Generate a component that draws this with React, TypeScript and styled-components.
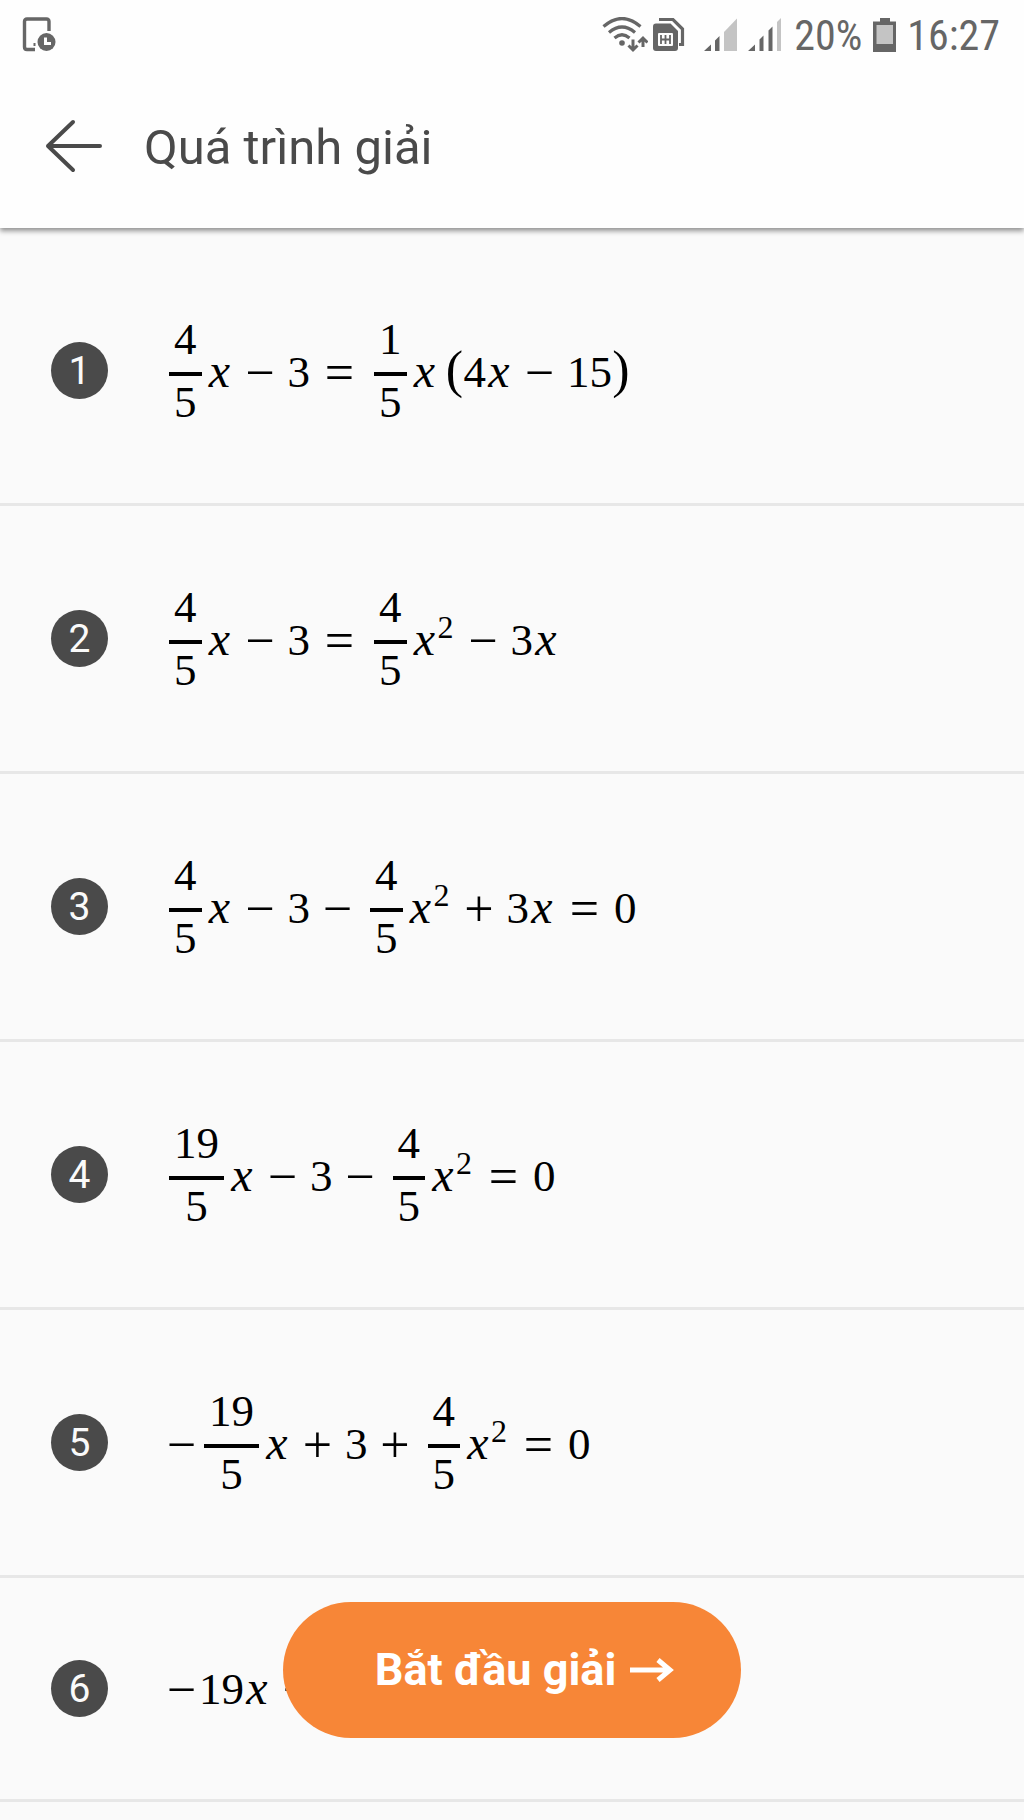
import React from "react";
import styled, { createGlobalStyle } from "styled-components";

const GlobalStyle = createGlobalStyle`
  * { box-sizing: border-box; }
  body { margin: 0; background: #fafafa; font-family: Roboto, "Noto Sans", sans-serif; }
`;

const Page = styled.div`
  min-height: 100vh;
  background: #fafafa;
`;

const Header = styled.header`
  position: relative;
  height: 228px;
  background: #fefefe;
  box-shadow: 0 3px 5px rgba(0, 0, 0, 0.42);
`;

const StatusBar = styled.div`
  display: flex;
  align-items: center;
  justify-content: space-between;
  height: 70px;
  padding: 0 24px 0 22px;
  color: #666;
`;

const StatusGroup = styled.div`
  display: flex;
  align-items: center;
`;

const StatusText = styled.span`
  padding-top: 2px;
  font-family: "Roboto Condensed", Roboto, sans-serif;
  font-size: 42px;
  line-height: 48px;
`;

const StatusIcon = styled.svg<{ $gap: number }>`
  display: block;
  flex: none;
  margin-right: ${(p) => p.$gap}px;
`;

const BatteryLevel = styled.div`
  display: flex;
  align-items: center;
  gap: 11px;
`;

const TitleBar = styled.div`
  display: flex;
  align-items: center;
  gap: 40px;
  height: 152px;
  padding: 0 44px;
`;

const BackButton = styled.button`
  display: flex;
  padding: 0;
  border: 0;
  background: none;
  color: #4a4a4a;
  cursor: pointer;
`;

const Title = styled.h1`
  margin: 0;
  padding-top: 4px;
  color: #4a4a4a;
  font-size: 49px;
  font-weight: 400;
  line-height: 60px;
`;

const Steps = styled.ol`
  margin: 0;
  padding: 10px 0 0;
  list-style: none;
`;

const Step = styled.li<{ $compact?: boolean }>`
  display: flex;
  align-items: center;
  gap: 56px;
  height: ${(p) => (p.$compact ? 224 : 268)}px;
  padding: 0 51px;
  border-bottom: 3px solid #e7e7e7;
`;

const Badge = styled.span`
  display: flex;
  flex: none;
  align-items: center;
  justify-content: center;
  width: 57px;
  height: 57px;
  border-radius: 50%;
  background: #4a4a4a;
  color: #fafafa;
  font-size: 39px;
  line-height: 46px;
`;

const Expression = styled.div`
  color: #000;
  font-family: "Liberation Serif", serif;
  font-size: 45px;
  line-height: 52px;
  white-space: nowrap;
`;

const FractionBox = styled.span`
  display: inline-flex;
  flex-direction: column;
  margin: 0 5px;
  text-align: center;
  vertical-align: 33px;
`;

const Numerator = styled.span`
  height: 59px;
`;

const Denominator = styled.span`
  padding: 0 5px;
  border-top: 4px solid #000;
`;

const NumeratorText = styled.span`
  padding: 0 5px;
`;

const Variable = styled.i`
  display: inline-block;
  width: 26px;
  font-size: 48px;
  text-align: center;
`;

const Sign = styled.span<{ $space: number }>`
  display: inline-block;
  width: 35px;
  margin: 0 ${(p) => p.$space}px;
  font-size: 52px;
  text-align: center;
  vertical-align: -3px;
`;

const Power = styled.span`
  margin-right: 2px;
  font-size: 32px;
  line-height: 32px;
  vertical-align: 17px;
`;

const Paren = styled.span<{ $lead?: number }>`
  display: inline-block;
  width: 18px;
  margin-left: ${(p) => p.$lead ?? 0}px;
  font-size: 52px;
  text-align: center;
`;

const ActionBar = styled.div`
  position: fixed;
  right: 0;
  bottom: 82px;
  left: 0;
  display: flex;
  justify-content: center;
  pointer-events: none;
`;

const StartButton = styled.button`
  display: flex;
  align-items: center;
  gap: 14px;
  height: 136px;
  padding: 0 67px 0 92px;
  border: 0;
  border-radius: 68px;
  background: #f78637;
  color: #fff;
  font-family: Roboto, "Noto Sans", sans-serif;
  font-size: 45px;
  font-weight: 700;
  line-height: 52px;
  white-space: nowrap;
  cursor: pointer;
  pointer-events: auto;
`;

const Fraction = ({ top, bottom }: { top: string; bottom: string }) => (
  <FractionBox>
    <Numerator>
      <NumeratorText>{top}</NumeratorText>
    </Numerator>
    <Denominator>{bottom}</Denominator>
  </FractionBox>
);

const X = () => <Variable>x</Variable>;
const XSquared = () => (
  <>
    <X />
    <Power as="sup">2</Power>
  </>
);
const Minus = () => <Sign $space={10}>−</Sign>;
const Plus = () => <Sign $space={10}>+</Sign>;
const Negative = () => <Sign $space={0}>−</Sign>;
const Equals = () => <Sign $space={12}>=</Sign>;

const DeviceClockIcon = () => (
  <StatusIcon $gap={0} width="34" height="36" viewBox="0 0 34 36">
    <path d="M27 14V4.500Q27 2 24.500 2H5Q2.500 2 2.500 4.500V30Q2.500 32.500 5 32.500H13" fill="none" stroke="#666" strokeWidth="3.400" />
    <path d="M12.500 26v3" stroke="#666" strokeWidth="2" />
    <circle cx="24.500" cy="25" r="9" fill="#666" />
    <path d="M23.500 20.500v6h5.500" fill="none" stroke="#fefefe" strokeWidth="3" />
  </StatusIcon>
);

const WifiIcon = () => (
  <StatusIcon $gap={5} width="46" height="36" viewBox="0 0 46 36">
    <g fill="none" stroke="#666" strokeWidth="3.200">
      <path d="M1.500 9.500Q20 -6.500 38.500 9.500" />
      <path d="M7 15.500Q20 4.500 33 15.500" />
      <path d="M12.500 21Q20 14.500 27.500 21" />
    </g>
    <circle cx="20" cy="26" r="2.800" fill="#666" />
    <path d="M31 22.500v10M26.500 28.500l4.500 4.500 4.500-4.500M41 30V21M36.500 25.500l4.500-4.500 4.500 4.500" fill="none" stroke="#666" strokeWidth="3" />
  </StatusIcon>
);

const SimIcon = () => (
  <StatusIcon $gap={19} width="32" height="36" viewBox="0 0 32 36">
    <path d="M6 2.500H20L29.500 12V27.500H26" fill="none" stroke="#666" strokeWidth="3.200" />
    <path d="M3 6.500H17.500L25 14V31Q25 34 22 34H3Q0 34 0 31V9.500Q0 6.500 3 6.500Z" fill="#666" />
    <rect x="5" y="16" width="15" height="13" rx="1" fill="#fefefe" />
    <path d="M8 18v9M12.500 18v9M17 18v9M8 22.500h9" fill="none" stroke="#666" strokeWidth="1.800" />
  </StatusIcon>
);

const SignalOneIcon = () => (
  <StatusIcon $gap={10} width="34" height="36" viewBox="0 0 34 36">
    <path d="M0 34L7 27.500V34ZM11 23.500L15.500 19V34H11Z" fill="#666" />
    <path d="M20 15L33 1.500V34H20Z" fill="#c4c4c4" />
  </StatusIcon>
);

const SignalTwoIcon = () => (
  <StatusIcon $gap={12} width="34" height="36" viewBox="0 0 34 36">
    <path d="M0 34L7 27.500V34ZM11.500 22.500L15.500 18.500V34H11.500ZM20.500 13.500L24.500 9.500V34H20.500Z" fill="#666" />
    <path d="M29 5L33 1V34H29Z" fill="#c4c4c4" />
  </StatusIcon>
);

const BatteryIcon = () => (
  <StatusIcon $gap={10} width="24" height="36" viewBox="0 0 24 36">
    <path d="M7 1H17V4.500H23V35H0V4.500H7Z" fill="#666" />
    <rect x="3.500" y="8" width="16.500" height="19" fill="#c4c4c4" />
  </StatusIcon>
);

export default function App() {
  return (
    <Page>
      <GlobalStyle />
      <Header>
        <StatusBar>
          <DeviceClockIcon />
          <StatusGroup>
            <WifiIcon />
            <SimIcon />
            <SignalOneIcon />
            <SignalTwoIcon />
            <BatteryLevel>
              <StatusText>20%</StatusText>
              <BatteryIcon />
            </BatteryLevel>
            <StatusText>16:27</StatusText>
          </StatusGroup>
        </StatusBar>
        <TitleBar>
          <BackButton type="button">
            <svg width="60" height="56" viewBox="0 0 60 56">
              <path d="M56 28H4M29 4L4 28L29 52" fill="none" stroke="currentColor" strokeWidth="4" strokeLinecap="round" strokeLinejoin="round" />
            </svg>
          </BackButton>
          <Title>Quá trình giải</Title>
        </TitleBar>
      </Header>

      <Steps>
        <Step>
          <Badge>1</Badge>
          <Expression>
            <Fraction top="4" bottom="5" /><X /><Minus />3<Equals /><Fraction top="1" bottom="5" /><X />
            <Paren $lead={8}>(</Paren>4<X /><Minus />15<Paren>)</Paren>
          </Expression>
        </Step>
        <Step>
          <Badge>2</Badge>
          <Expression>
            <Fraction top="4" bottom="5" /><X /><Minus />3<Equals /><Fraction top="4" bottom="5" /><XSquared /><Minus />3<X />
          </Expression>
        </Step>
        <Step>
          <Badge>3</Badge>
          <Expression>
            <Fraction top="4" bottom="5" /><X /><Minus />3<Minus /><Fraction top="4" bottom="5" /><XSquared /><Plus />3<X /><Equals />0
          </Expression>
        </Step>
        <Step>
          <Badge>4</Badge>
          <Expression>
            <Fraction top="19" bottom="5" /><X /><Minus />3<Minus /><Fraction top="4" bottom="5" /><XSquared /><Equals />0
          </Expression>
        </Step>
        <Step>
          <Badge>5</Badge>
          <Expression>
            <Negative /><Fraction top="19" bottom="5" /><X /><Plus />3<Plus /><Fraction top="4" bottom="5" /><XSquared /><Equals />0
          </Expression>
        </Step>
        <Step $compact>
          <Badge>6</Badge>
          <Expression>
            <Negative />19<X /><Plus />
          </Expression>
        </Step>
      </Steps>

      <ActionBar>
        <StartButton type="button">
          Bắt đầu giải
          <svg width="44" height="26" viewBox="0 0 44 26">
            <path d="M0 13H40M28 3L40 13L28 23" fill="none" stroke="currentColor" strokeWidth="5" />
          </svg>
        </StartButton>
      </ActionBar>
    </Page>
  );
}
